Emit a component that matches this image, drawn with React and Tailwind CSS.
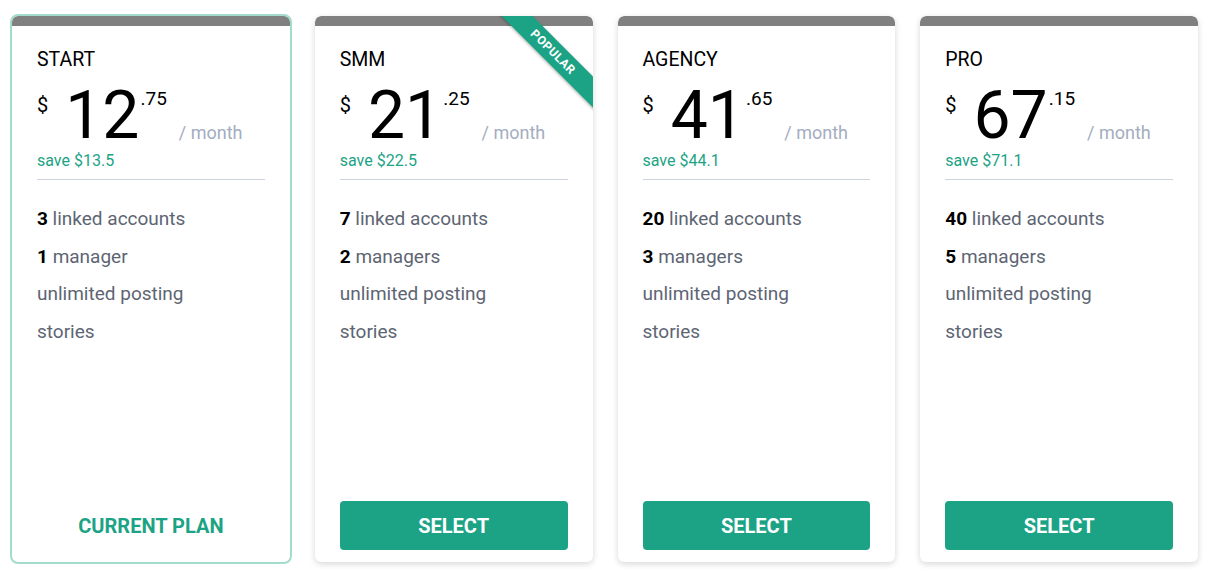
const plans = [
  { name: "START", dollars: "12", cents: ".75", save: "save $13.5", accounts: "3", managers: "1", managerLabel: "manager", current: true },
  { name: "SMM", dollars: "21", cents: ".25", save: "save $22.5", accounts: "7", managers: "2", managerLabel: "managers", popular: true },
  { name: "AGENCY", dollars: "41", cents: ".65", save: "save $44.1", accounts: "20", managers: "3", managerLabel: "managers" },
  { name: "PRO", dollars: "67", cents: ".15", save: "save $71.1", accounts: "40", managers: "5", managerLabel: "managers" },
]

function PlanCard({ plan }) {
  return (
    <div
      className={
        plan.current
          ? "relative flex flex-col h-[546px] bg-white rounded-md outline-2 outline-[#a3dccd]"
          : "relative flex flex-col h-[546px] bg-white rounded-md overflow-hidden shadow-[0_2px_6px_rgba(0,0,0,0.16)]"
      }
    >
      {/* top bar */}
      <div className="h-[10px] bg-[#808080] rounded-t-md" />

      {plan.popular && (
        <div className="absolute left-[158px] top-[25px] w-[160px] h-[22px] rotate-45 bg-[#1ca385] shadow-[0_1px_3px_rgba(0,0,0,0.3)] flex items-center justify-center">
          <span className="text-[12px] font-bold text-white tracking-[0.5px]">POPULAR</span>
        </div>
      )}

      <div className="flex flex-col flex-1 px-[25px] pt-[20px] pb-3">
        <div className="text-[19.5px] leading-7 text-black">{plan.name}</div>

        {/* price */}
        <div className="pb-2 border-b border-[#cdd3de]">
          <div className="flex items-start mt-[9px] h-[64px]">
            <span className="text-[20px] leading-none mt-[12px] text-black">$</span>
            <span className="text-[66px] leading-none ml-[17px] text-black">{plan.dollars}</span>
            <span className="text-[19px] leading-none mt-[6px] ml-[1px] text-black">{plan.cents}</span>
            <span className="text-[18px] leading-none mt-[41px] ml-[12px] text-[#a3adbf]">/ month</span>
          </div>
          <div className="mt-[4px] text-[16px] leading-5 text-[#1ca385]">{plan.save}</div>
        </div>

        {/* features */}
        <ul className="mt-5 text-[19px] leading-[37.5px] text-[#5d6573]">
          <li>
            <span className="font-bold text-black">{plan.accounts}</span> linked accounts
          </li>
          <li>
            <span className="font-bold text-black">{plan.managers}</span> {plan.managerLabel}
          </li>
          <li>unlimited posting</li>
          <li>stories</li>
        </ul>

        {plan.current ? (
          <div className="mt-auto h-[49px] flex items-center justify-center text-[20px] font-bold text-[#1ca385]">
            CURRENT PLAN
          </div>
        ) : (
          <button className="mt-auto h-[49px] w-full rounded-[4px] bg-[#1ca385] text-white text-[20px] font-bold">
            SELECT
          </button>
        )}
      </div>
    </div>
  )
}

export default function App() {
  return (
    <div className="w-[1210px] h-[579px] bg-white px-3 pt-4 font-['Roboto',sans-serif]">
      <div className="grid grid-cols-4 gap-[25px]">
        {plans.map((plan) => (
          <PlanCard key={plan.name} plan={plan} />
        ))}
      </div>
    </div>
  )
}
